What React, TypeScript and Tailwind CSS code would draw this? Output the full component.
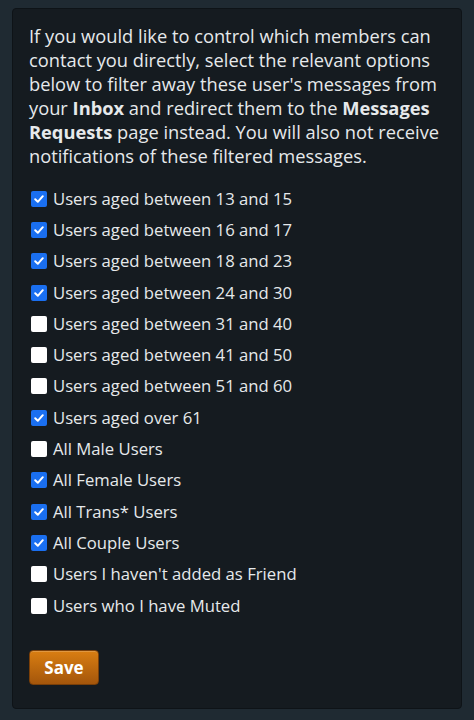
import React, { useState } from "react";

const items: [string, boolean][] = [
  ["Users aged between 13 and 15", true],
  ["Users aged between 16 and 17", true],
  ["Users aged between 18 and 23", true],
  ["Users aged between 24 and 30", true],
  ["Users aged between 31 and 40", false],
  ["Users aged between 41 and 50", false],
  ["Users aged between 51 and 60", false],
  ["Users aged over 61", true],
  ["All Male Users", false],
  ["All Female Users", true],
  ["All Trans* Users", true],
  ["All Couple Users", true],
  ["Users I haven't added as Friend", false],
  ["Users who I have Muted", false],
];

function Box({ checked }: { checked: boolean }) {
  if (checked) {
    return (
      <span className="flex h-[16px] w-[16px] shrink-0 items-center justify-center rounded-[2px] bg-[#1a6ff0]">
        <svg width="12" height="12" viewBox="0 0 12 12">
          <path d="M2.2 6.3 L4.8 8.8 L9.8 3.2" fill="none" stroke="#fff" strokeWidth="2" strokeLinecap="round" strokeLinejoin="round" />
        </svg>
      </span>
    );
  }
  return <span className="block h-[16px] w-[16px] shrink-0 rounded-[2px] bg-white" />;
}

export default function App() {
  const [state, setState] = useState(items.map((i) => i[1]));
  return (
    <div
      className="min-h-[720px] w-full bg-[#1f2a32] px-3 pt-2 pb-3"
      style={{ fontFamily: '"Open Sans", "Liberation Sans", sans-serif' }}
    >
      <div className="rounded-[4px] border border-[#0e1317] bg-[#151b20] px-4 pt-[15px] pb-[23px] leading-[24px] text-[#e6e9eb]">
        <p className="mb-[15px] text-[18.3px]">
          If you would like to control which members can contact you directly, select the relevant options below to filter away these user's messages from your <b>Inbox</b> and redirect them to the <b>Messages Requests</b> page instead. You will also not receive notifications of these filtered messages.
        </p>
        <div className="flex flex-col text-[16.7px]">
          {items.map(([label], i) => (
            <label
              key={label}
              className="flex h-[31.3px] cursor-pointer items-center gap-[6px] pl-[2px]"
              onClick={() => setState((s) => s.map((v, j) => (j === i ? !v : v)))}
            >
              <Box checked={state[i]} />
              <span>{label}</span>
            </label>
          ))}
        </div>
        <button className="mt-[29px] h-[35px] w-[70px] rounded-[4px] border border-[#7a3f08] bg-gradient-to-b from-[#d97e12] to-[#a4560b] text-[17px] font-bold text-white shadow-[inset_0_1px_0_rgba(255,255,255,0.2)]">
          Save
        </button>
      </div>
    </div>
  );
}
